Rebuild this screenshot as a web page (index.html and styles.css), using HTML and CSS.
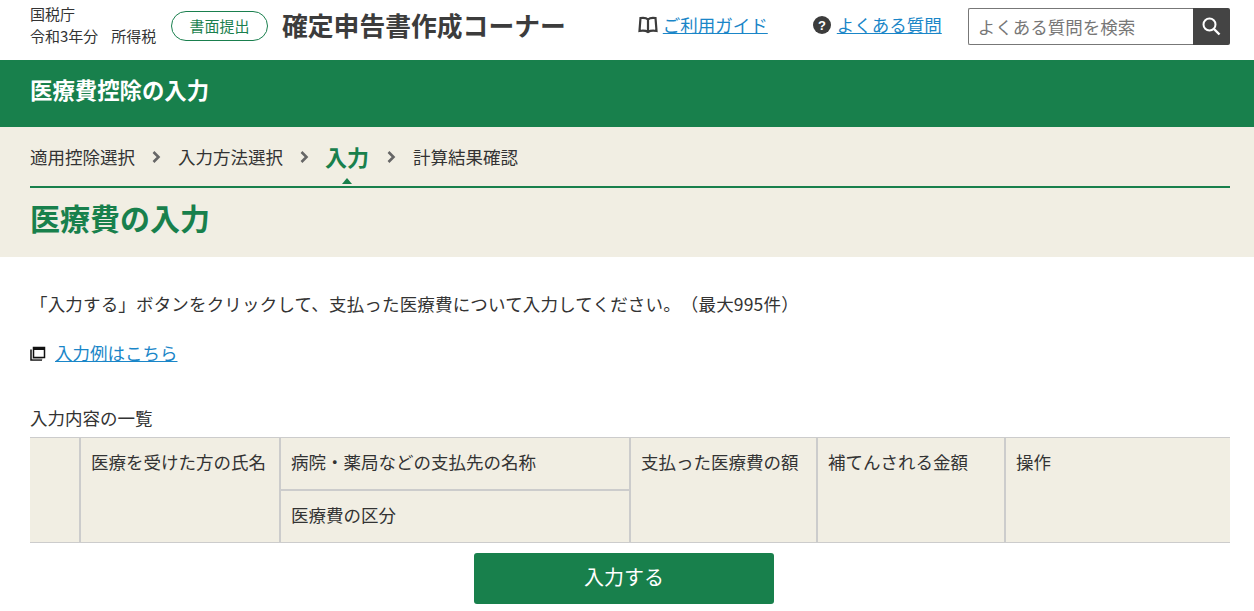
FILE: index.html
```html
<!DOCTYPE html>
<html lang="ja">
<head>
<meta charset="utf-8">
<title>医療費の入力</title>
<link rel="stylesheet" href="styles.css">
</head>
<body>
<header class="top">
  <div class="org"><div>国税庁</div><div>令和3年分<span class="tax">所得税</span></div></div>
  <span class="pill">書面提出</span>
  <div class="brand">確定申告書作成コーナー</div>
  <nav class="tools">
    <svg class="ic-book" width="20" height="18" viewBox="0 0 20 18"><path d="M10 3.500C8.500 2 5 1.600 2.500 2L1.500 15c3-.5 6.500-.3 8.500 1 2-1.300 5.500-1.500 8.500-1L17.500 2C15 1.600 11.500 2 10 3.500zM10 3.500V16" fill="none" stroke="#3c3c3c" stroke-width="2.200"/></svg>
    <a class="link guide" href="#">ご利用ガイド</a>
    <svg class="ic-help" width="18" height="18" viewBox="0 0 18 18"><circle cx="9" cy="9" r="9" fill="#3c3c3c"/><text x="9" y="13.500" font-size="13" font-weight="700" text-anchor="middle" fill="#fff" font-family="Liberation Sans">?</text></svg>
    <a class="link" href="#">よくある質問</a>
  </nav>
  <form class="search">
    <input class="search-input" type="text" placeholder="よくある質問を検索">
    <button class="search-btn" type="button" aria-label="検索">
      <svg width="20" height="20" viewBox="0 0 20 20"><circle cx="8.500" cy="8.500" r="6" fill="none" stroke="#fff" stroke-width="2"/><path d="M13 13l5.500 5.500" stroke="#fff" stroke-width="2.400" fill="none"/></svg>
    </button>
  </form>
</header>
<div class="band">医療費控除の入力</div>
<section class="progress">
  <ol class="steps">
    <li>適用控除選択</li>
    <li class="sep"><svg width="9" height="12" viewBox="0 0 9 12"><path d="M1.500 1l5 5-5 5" fill="none" stroke="#666" stroke-width="2.600"/></svg></li>
    <li>入力方法選択</li>
    <li class="sep"><svg width="9" height="12" viewBox="0 0 9 12"><path d="M1.500 1l5 5-5 5" fill="none" stroke="#666" stroke-width="2.600"/></svg></li>
    <li class="current">入力</li>
    <li class="sep"><svg width="9" height="12" viewBox="0 0 9 12"><path d="M1.500 1l5 5-5 5" fill="none" stroke="#666" stroke-width="2.600"/></svg></li>
    <li>計算結果確認</li>
  </ol>
  <h1 class="title">医療費の入力</h1>
</section>
<main class="content">
  <p class="lead">「入力する」ボタンをクリックして、支払った医療費について入力してください。（最大995件）</p>
  <p class="example">
    <svg width="16" height="16" viewBox="0 0 16 16"><path d="M1 4.500V15h11" fill="none" stroke="#111" stroke-width="1.500"/><path d="M2.500 14h10" stroke="#888" stroke-width="1"/><rect x="3.500" y="2.500" width="11" height="10" fill="#fff" stroke="#111" stroke-width="1.500"/><rect x="3" y="2" width="12" height="3" fill="#111"/></svg>
    <a class="link" href="#">入力例はこちら</a>
  </p>
  <div class="caption">入力内容の一覧</div>
  <table class="list">
    <colgroup><col class="c1"><col class="c2"><col class="c3"><col class="c4"><col class="c5"><col class="c6"></colgroup>
    <thead>
      <tr class="r1"><th rowspan="2"></th><th rowspan="2">医療を受けた方の氏名</th><th>病院・薬局などの支払先の名称</th><th rowspan="2">支払った医療費の額</th><th rowspan="2">補てんされる金額</th><th rowspan="2">操作</th></tr>
      <tr class="r2"><th>医療費の区分</th></tr>
    </thead>
  </table>
  <div class="actions"><button class="primary" type="button">入力する</button></div>
</main>
</body>
</html>
```
FILE: styles.css
```css
* { box-sizing: border-box; }
html, body { margin: 0; padding: 0; overflow: hidden; }
body {
  width: 1254px;
  height: 611px;
  background: #fff;
  color: #333;
  font-family: "Noto Sans CJK JP", "Noto Sans", sans-serif;
  font-size: 17.5px;
  font-weight: 400;
  text-spacing-trim: space-all;
}
.top { display: flex; align-items: center; height: 60px; padding: 0 24px 0 30px; }
.top > * { flex-shrink: 0; }
.org { width: 141px; font-size: 15px; line-height: 22px; margin-top: -10px; white-space: nowrap; }
.tax { margin-left: 13px; }
.pill {
  display: flex; align-items: center; justify-content: center;
  width: 97px; height: 30px; margin-top: -9px;
  border: 1px solid #1a7f4e; border-radius: 15px;
  color: #1a7f4e; font-size: 15px;
}
.brand { margin-left: 14px; margin-top: -12px; font-size: 25.800px; font-weight: 700; color: #3c3c3c; white-space: nowrap; }
.tools { display: flex; align-items: center; width: 305px; margin-left: 72px; margin-top: -12px; white-space: nowrap; }
.ic-book { flex-shrink: 0; margin-right: 5px; margin-top: 2px; }
.ic-help { flex-shrink: 0; margin-right: 6px; margin-top: 2px; }
.link { color: #1a86c8; text-decoration: underline; }
.guide { margin-right: 45px; }
.search { display: flex; margin-left: 25px; margin-top: -8px; }
.search-input {
  width: 225px; height: 37px; padding: 0 9px;
  border: 1px solid #777; border-right: 0; border-radius: 2px 0 0 2px;
  font: inherit; color: #333; background: #fff; outline: 0;
}
.search-input::placeholder { color: #777; opacity: 1; }
.search-btn {
  display: flex; align-items: center; justify-content: center;
  width: 37px; height: 37px; padding: 0; border: 0; border-radius: 0 2px 2px 0;
  background: #444;
}
.band {
  display: flex; align-items: center; height: 67px; padding: 0 30px 10px;
  background: #18804c; color: #fff; font-size: 22.400px; font-weight: 700;
}
.progress { height: 130px; padding: 0 24px 0 30px; background: #f1eee3; }
.steps {
  display: flex; align-items: center; gap: 17px;
  height: 61px; margin: 0; padding: 0; list-style: none;
  border-bottom: 2px solid #18804c;
}
.steps li { white-space: nowrap; line-height: 1; }
.sep { display: flex; }
.steps .current { position: relative; margin: -2px 1px 0 -1px; color: #18804c; font-size: 22px; font-weight: 700; }
.current::after {
  content: ""; position: absolute; left: 17px; top: 33px;
  border: 5px solid transparent; border-top: 0; border-bottom: 6px solid #18804c;
}
.title { margin: 0; padding-top: 7px; font-size: 30px; line-height: 44px; font-weight: 700; color: #18804c; }
.content { padding: 0 24px 0 30px; }
.lead { margin: 0; padding-top: 33px; line-height: 28px; letter-spacing: 0.17px; }
.example { display: flex; align-items: center; gap: 9px; margin: 21px 0 0; line-height: 28px; }
.caption { margin-top: 37px; line-height: 28px; }
.list { width: 1200px; margin-top: 5px; border-collapse: collapse; table-layout: fixed; background: #f1eee3; }
.c1 { width: 50px; } .c2 { width: 200px; } .c3 { width: 350px; } .c4 { width: 187px; } .c5 { width: 188px; } .c6 { width: 225px; }
.r1 { height: 52px; }
.r2 { height: 53px; }
.list th {
  padding: 10px 10px 0 10px; vertical-align: top; text-align: left;
  font-weight: 400; line-height: 28px;
  border: 2px solid #ccc; border-top-width: 1px; border-bottom-width: 1px;
}
.list th:first-child { border-left: 0; }
.list th:last-child { border-right: 0; }
.list .r2 th { border-top: 2px solid #ccc; border-left: 2px solid #ccc; border-right: 2px solid #ccc; }
.actions { display: flex; justify-content: center; margin-top: 10px; padding-right: 12px; }
.primary {
  width: 300px; height: 51px; padding: 0 0 4px; border: 0; border-radius: 3px;
  background: #18804c; color: #fff; font: inherit; font-size: 20px;
}
```
